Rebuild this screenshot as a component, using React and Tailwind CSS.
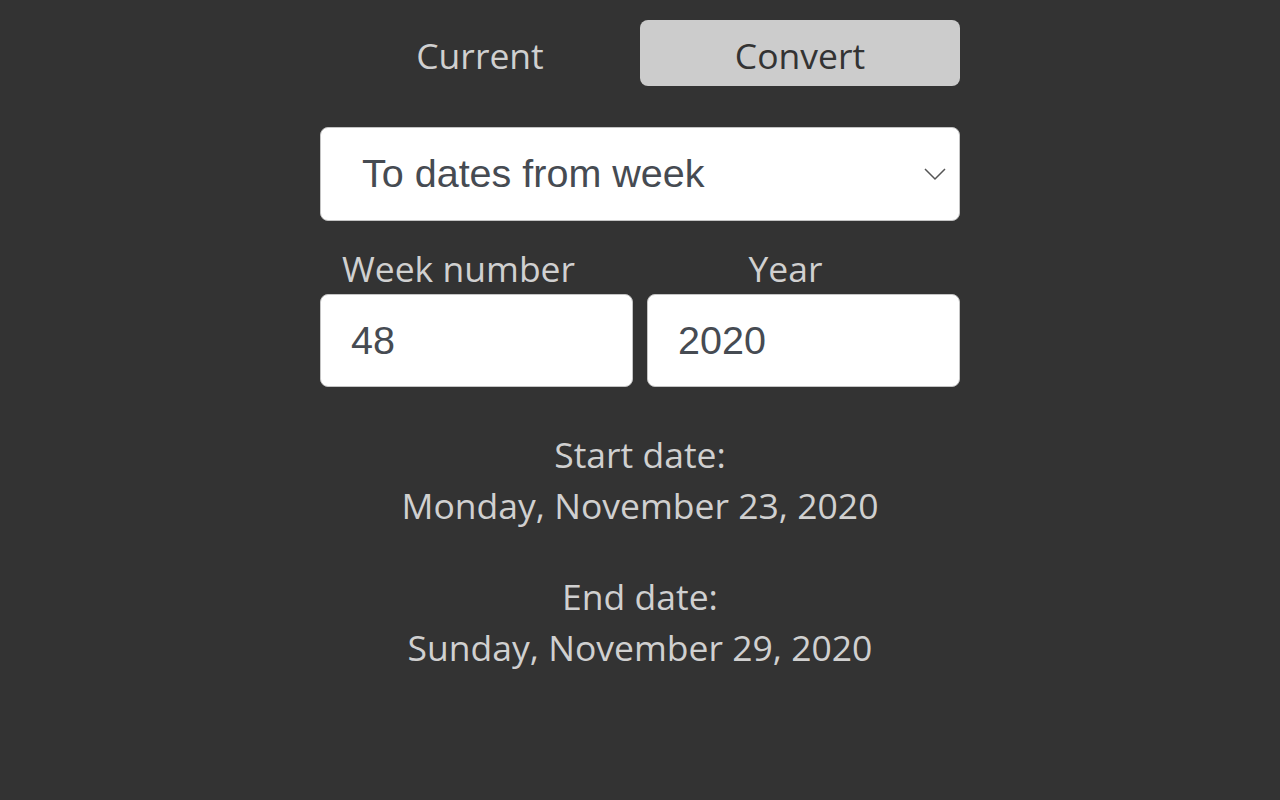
import React, { useState } from 'react';

const App = () => {
    const [tab, setTab] = useState('convert');
    const [week, setWeek] = useState('48');
    const [year, setYear] = useState('2020');

    return (
        <div className="min-h-screen bg-[#333333] font-['Open_Sans',sans-serif] text-[#d0d0d0]">
            <div className="w-[640px] mx-auto pt-[20px]">

                <div className="grid grid-cols-2 h-[66px]">
                    <button
                        onClick={() => setTab('current')}
                        className={`h-[66px] text-[35.5px] leading-[62px] pt-[4px] rounded-lg ${tab === 'current' ? 'bg-[#cccccc] text-[#333333]' : 'text-[#d0d0d0]'}`}
                    >
                        Current
                    </button>
                    <button
                        onClick={() => setTab('convert')}
                        className={`h-[66px] text-[35.5px] leading-[62px] pt-[4px] rounded-lg ${tab === 'convert' ? 'bg-[#cccccc] text-[#333333]' : 'text-[#d0d0d0]'}`}
                    >
                        Convert
                    </button>
                </div>

                <div className="relative mt-[41px]">
                    <select className="appearance-none w-full h-[94px] bg-white border border-[#c4c4c4] rounded-lg pl-[41px] font-['Liberation_Sans',Arial,sans-serif] text-[39.5px] text-[#464b52] outline-none">
                        <option>To dates from week</option>
                        <option>To week from date</option>
                    </select>
                    <svg className="absolute right-[14px] top-[40px] pointer-events-none" width="22" height="14" viewBox="0 0 22 14" fill="none">
                        <polyline points="1,2 11,12 21,2" stroke="#555" strokeWidth="1.5" />
                    </svg>
                </div>

                <div className="grid grid-cols-2 gap-[14px] mt-[27px]">
                    <label className="flex flex-col">
                        <span className="text-[35.5px] leading-[40px] pb-[6px] text-center pr-[36px]">Week number</span>
                        <input
                            value={week}
                            onChange={(e) => setWeek(e.target.value)}
                            className="h-[93px] bg-white border border-[#c4c4c4] rounded-lg pl-[30px] font-['Liberation_Sans',Arial,sans-serif] text-[39.5px] text-[#464b52] outline-none"
                        />
                    </label>
                    <label className="flex flex-col">
                        <span className="text-[35.5px] leading-[40px] pb-[6px] text-center pr-[36px]">Year</span>
                        <input
                            value={year}
                            onChange={(e) => setYear(e.target.value)}
                            className="h-[93px] bg-white border border-[#c4c4c4] rounded-lg pl-[30px] font-['Liberation_Sans',Arial,sans-serif] text-[39.5px] text-[#464b52] outline-none"
                        />
                    </label>
                </div>

                <div className="mt-[42px] text-center text-[35.5px] leading-[51px]">
                    <p>Start date:</p>
                    <p>Monday, November 23, 2020</p>
                    <p className="mt-[40px]">End date:</p>
                    <p>Sunday, November 29, 2020</p>
                </div>

            </div>
        </div>
    );
};

export default App;
